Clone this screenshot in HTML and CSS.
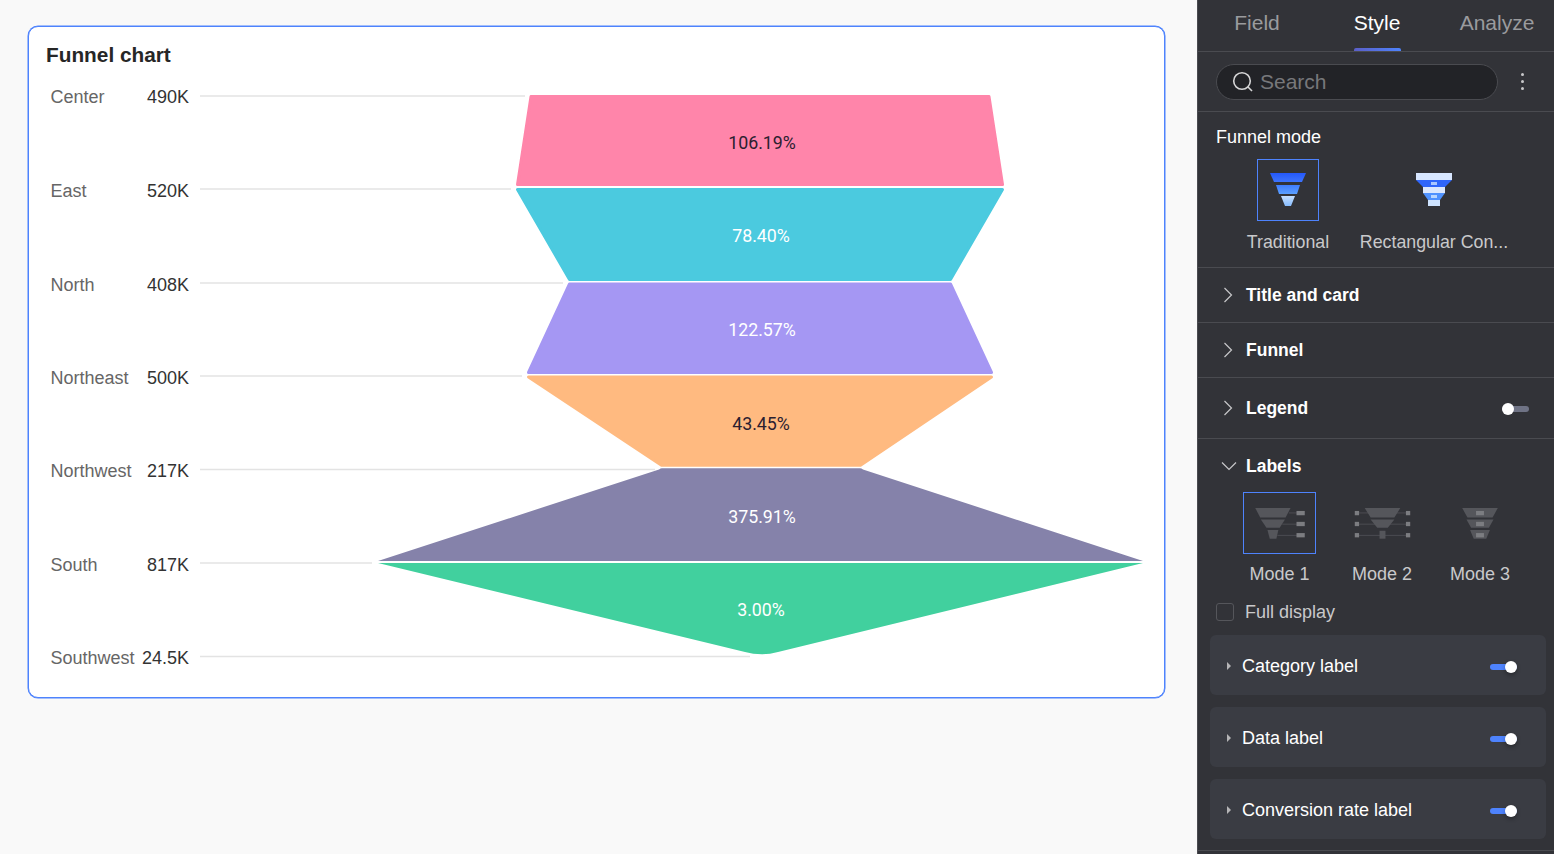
FILE: index.html
```html
<!DOCTYPE html>
<html>
<head>
    <title>Funnel chart</title>
    <meta charset="UTF-8">
    <link rel="stylesheet" href="styles.css">
</head>
<body>
    <div class="canvas">
        <div class="card">
            <h2 class="card-title">Funnel chart</h2>
            <!-- viewBox uses page coordinates so the shapes are easy to read off -->
            <svg class="funnel" viewBox="29 79 1135 618" width="1135" height="618">
                <g class="leaders">
                    <line x1="200" x2="525" y1="96" y2="96"/>
                    <line x1="200" x2="511" y1="189" y2="189"/>
                    <line x1="200" x2="563" y1="283" y2="283"/>
                    <line x1="200" x2="522" y1="376" y2="376"/>
                    <line x1="200" x2="655" y1="469.5" y2="469.5"/>
                    <line x1="200" x2="372" y1="563" y2="563"/>
                    <line x1="200" x2="750" y1="656.5" y2="656.5"/>
                </g>
                <g class="cat">
                    <text x="50.5" y="103">Center</text>
                    <text x="50.5" y="197">East</text>
                    <text x="50.5" y="291">North</text>
                    <text x="50.5" y="384">Northeast</text>
                    <text x="50.5" y="477">Northwest</text>
                    <text x="50.5" y="571">South</text>
                    <text x="50.5" y="664">Southwest</text>
                </g>
                <g class="val">
                    <text x="189" y="103">490K</text>
                    <text x="189" y="197">520K</text>
                    <text x="189" y="291">408K</text>
                    <text x="189" y="384">500K</text>
                    <text x="189" y="477">217K</text>
                    <text x="189" y="571">817K</text>
                    <text x="189" y="664">24.5K</text>
                </g>
                <polygon class="seg" fill="#ff85aa" stroke="#ff85aa" points="531,96.5 989,96.5 1002.5,184.5 517.5,184.5"/>
                <polygon class="seg" fill="#4bcadf" stroke="#4bcadf" points="517.5,189.5 1002.5,189.5 950.5,279.5 569.5,279.5"/>
                <polygon class="seg" fill="#a597f3" stroke="#a597f3" points="569.5,284 950.5,284 991.5,372.5 528.5,372.5"/>
                <polygon class="seg" fill="#ffba80" stroke="#ffba80" points="528.5,377 991.5,377 860.5,465.2 661.5,465.2"/>
                <path fill="#8582aa" d="M378,561 L659,469.5 Q660.5,468.3 662,468.3 H860 Q861.5,468.3 863,469.5 L1143,561 Z"/>
                <path fill="#41d09e" d="M378,563 H1143 L778,652 Q770,654.3 762,654.3 Q753,654.3 745,652 Z"/>
                <g class="pct">
                    <text x="762" y="149" class="pct-dark">106.19%</text>
                    <text x="761" y="242">78.40%</text>
                    <text x="762" y="335.5">122.57%</text>
                    <text x="761" y="429.5" class="pct-dark">43.45%</text>
                    <text x="762" y="522.5">375.91%</text>
                    <text x="761" y="616">3.00%</text>
                </g>
            </svg>
        </div>
    </div>

    <div class="panel">
        <div class="tabs">
            <div class="tab">Field</div>
            <div class="tab active">Style</div>
            <div class="tab">Analyze</div>
        </div>

        <div class="search-row">
            <div class="search">
                <svg class="search-icon" viewBox="0 0 22 22" width="22" height="22">
                    <circle cx="10" cy="10" r="8.3"/>
                    <line x1="16" y1="16" x2="20" y2="20"/>
                </svg>
                <span>Search</span>
            </div>
            <div class="kebab"><i></i><i></i><i></i></div>
        </div>

        <div class="mode-section">
            <div class="section-label">Funnel mode</div>
            <div class="mode-grid">
                <div class="mode-item">
                    <div class="mode-box selected">
                        <svg viewBox="0 0 36 34" width="36" height="34">
                            <defs>
                                <linearGradient id="fa" x1="0" x2="0" y1="0" y2="1">
                                    <stop offset="0" stop-color="#2458fb"/>
                                    <stop offset="1" stop-color="#3d74fd"/>
                                </linearGradient>
                                <linearGradient id="fb" x1="0" x2="0" y1="0" y2="1">
                                    <stop offset="0" stop-color="#3f7cfd"/>
                                    <stop offset="1" stop-color="#5ba0ff"/>
                                </linearGradient>
                                <linearGradient id="fc" x1="0" x2="0" y1="0" y2="1">
                                    <stop offset="0" stop-color="#c6e0ff"/>
                                    <stop offset="1" stop-color="#86bcff"/>
                                </linearGradient>
                            </defs>
                            <polygon fill="url(#fa)" points="0,0 36,0 32,9 4,9"/>
                            <polygon fill="url(#fb)" points="6,12 30,12 27,21 9,21"/>
                            <polygon fill="url(#fc)" points="11,23 25,23 21,33 15,33"/>
                        </svg>
                    </div>
                    <div class="mode-name">Traditional</div>
                </div>
                <div class="mode-item">
                    <div class="mode-box">
                        <svg viewBox="0 0 36 34" width="36" height="34">
                            <rect fill="#d7e6ff" x="0" y="0" width="36" height="7"/>
                            <polygon fill="#2f66fb" points="0,7 36,7 29,14 7,14"/>
                            <rect fill="#a9c6ff" x="15" y="9" width="6" height="3"/>
                            <rect fill="#dbe8ff" x="7" y="14" width="22" height="6"/>
                            <polygon fill="#4f92ff" points="7,20 29,20 24,27 12,27"/>
                            <rect fill="#b9d6ff" x="15" y="22" width="6" height="3"/>
                            <rect fill="#cfe4ff" x="12" y="27" width="12" height="6"/>
                        </svg>
                    </div>
                    <div class="mode-name">Rectangular Con...</div>
                </div>
            </div>
        </div>

        <div class="row row-title">
            <svg class="chev" viewBox="0 0 10 16" width="10" height="16"><polyline points="1.5,1 8.5,8 1.5,15"/></svg>
            <span>Title and card</span>
        </div>
        <div class="row row-funnel">
            <svg class="chev" viewBox="0 0 10 16" width="10" height="16"><polyline points="1.5,1 8.5,8 1.5,15"/></svg>
            <span>Funnel</span>
        </div>
        <div class="row row-legend">
            <svg class="chev" viewBox="0 0 10 16" width="10" height="16"><polyline points="1.5,1 8.5,8 1.5,15"/></svg>
            <span>Legend</span>
            <div class="toggle off"><i></i></div>
        </div>

        <div class="labels-section">
            <div class="labels-head">
                <svg class="chev-down" viewBox="0 0 16 10" width="16" height="10"><polyline points="1,1.5 8,8.5 15,1.5"/></svg>
                <span>Labels</span>
            </div>
            <div class="label-grid">
                <div class="mode-item">
                    <div class="label-box selected">
                        <svg viewBox="60 55 156 100" width="52" height="33">
                            <g class="ln"><line x1="165" x2="190" y1="73" y2="73"/><line x1="145" x2="190" y1="107" y2="107"/><line x1="130" x2="190" y1="141" y2="141"/></g>
                            <g class="tr"><polygon points="63,58 170,58 155,87 78,87"/><polygon points="80,93 153,93 137,118 97,118"/><polygon points="100,125 133,125 127,151 107,151"/></g>
                            <g class="bx"><rect x="188" y="67" width="25" height="13"/><rect x="188" y="100" width="25" height="13"/><rect x="188" y="134" width="25" height="13"/></g>
                        </svg>
                    </div>
                    <div class="mode-name">Mode 1</div>
                </div>
                <div class="mode-item">
                    <div class="label-box">
                        <svg viewBox="355 55 172 100" width="57" height="33">
                            <g class="ln"><line x1="363" x2="518" y1="73" y2="73"/><line x1="363" x2="518" y1="107" y2="107"/><line x1="363" x2="518" y1="141" y2="141"/></g>
                            <g class="tr"><polygon points="387,58 495,58 477,87 405,87"/><polygon points="405,93 477,93 457,118 425,118"/><rect x="432" y="127" width="18" height="24"/></g>
                            <g class="bx"><rect x="357" y="67" width="13" height="13"/><rect x="512" y="67" width="13" height="13"/><rect x="357" y="100" width="13" height="13"/><rect x="512" y="100" width="13" height="13"/><rect x="357" y="134" width="13" height="13"/><rect x="512" y="134" width="13" height="13"/></g>
                        </svg>
                    </div>
                    <div class="mode-name">Mode 2</div>
                </div>
                <div class="mode-item">
                    <div class="label-box">
                        <svg viewBox="678 55 114 100" width="38" height="33">
                            <g class="tr"><polygon points="681,58 789,58 773,87 697,87"/><polygon points="694,93 776,93 762,118 708,118"/><polygon points="705,125 765,125 754,151 716,151"/></g>
                            <g class="bx"><rect x="723" y="67" width="24" height="13"/><rect x="723" y="100" width="24" height="13"/><rect x="723" y="134" width="24" height="13"/></g>
                        </svg>
                    </div>
                    <div class="mode-name">Mode 3</div>
                </div>
            </div>
            <div class="full-display">
                <div class="checkbox"></div>
                <span>Full display</span>
            </div>
        </div>

        <div class="sub-cards">
            <div class="sub-card">
                <i class="caret"></i>
                <span>Category label</span>
                <div class="toggle on"><i></i></div>
            </div>
            <div class="sub-card">
                <i class="caret"></i>
                <span>Data label</span>
                <div class="toggle on"><i></i></div>
            </div>
            <div class="sub-card">
                <i class="caret"></i>
                <span>Conversion rate label</span>
                <div class="toggle on"><i></i></div>
            </div>
        </div>
    </div>
</body>
</html>
```

FILE: styles.css
```css
html, body {
    height: 100%;
}
body {
    margin: 0;
    display: flex;
    height: 854px;
    overflow: hidden;
    background-color: #f9f9f9;
    font-family: "Liberation Sans", Arial, sans-serif;
}

/* left side */
.canvas {
    width: 1197px;
    padding: 26px 32px 0 28px;
    box-sizing: border-box;
}
.card {
    height: 672px;
    box-sizing: border-box;
    background-color: #ffffff;
    border: 1px solid #4e83fd;
    border-radius: 10px;
    box-shadow: 0 0 0 0.5px #4e83fd;
    overflow: hidden;
}
.card-title {
    margin: 0;
    padding: 15px 0 0 17px;
    height: 37px;
    box-sizing: border-box;
    font-size: 20.8px;
    line-height: 25px;
    font-weight: bold;
    color: #262626;
}
.funnel {
    display: block;
    margin-top: 15px;
}
.leaders line {
    stroke: #e3e3e3;
    stroke-width: 1.5;
}
.cat text {
    font-size: 18px;
    fill: #666666;
}
.val text {
    font-size: 18px;
    fill: #333333;
    text-anchor: end;
}
.seg {
    stroke-width: 3;
    stroke-linejoin: round;
}
.pct text {
    font-family: Roboto, sans-serif;
    font-size: 17.8px;
    fill: #ffffff;
    text-anchor: middle;
}
.pct .pct-dark {
    fill: #2b2030;
}

/* right side */
.panel {
    width: 357px;
    flex-shrink: 0;
    box-sizing: border-box;
    background-color: #323338;
    border-left: 1px solid #4a4b50;
    color: #ffffff;
}
.tabs {
    display: flex;
    height: 52px;
    box-sizing: border-box;
    border-bottom: 1px solid #4a4b50;
}
.tab {
    width: 120px;
    flex-shrink: 0;
    text-align: center;
    font-size: 21px;
    line-height: 46px;
    color: #9a9b9e;
}
.tab:first-child {
    margin-left: -1px;
}
.tab.active {
    color: #ffffff;
    position: relative;
}
.tab.active::after {
    content: "";
    position: absolute;
    left: 37px;
    right: 36px;
    bottom: 0;
    height: 3px;
    border-radius: 2px 2px 0 0;
    background: linear-gradient(90deg, #5b5fc7, #4e83fd);
}
.search-row {
    display: flex;
    align-items: center;
    height: 60px;
    box-sizing: border-box;
    border-bottom: 1px solid #4a4b50;
    padding: 0 0 0 18px;
}
.search {
    display: flex;
    align-items: center;
    gap: 6px;
    width: 282px;
    height: 36px;
    box-sizing: border-box;
    padding-left: 15px;
    background-color: #222327;
    border: 1px solid #4a4b50;
    border-radius: 18px;
    font-size: 21px;
    color: #77787b;
}
.search-icon {
    flex-shrink: 0;
}
.search-icon circle,
.search-icon line {
    fill: none;
    stroke: #d5d5d6;
    stroke-width: 1.6;
}
.kebab {
    display: flex;
    flex-direction: column;
    gap: 4px;
    margin-left: 23px;
}
.kebab i {
    width: 3px;
    height: 3px;
    border-radius: 50%;
    background-color: #c8c8ca;
}
.mode-section {
    height: 156px;
    box-sizing: border-box;
    border-bottom: 1px solid #4a4b50;
    padding-top: 14px;
}
.section-label {
    padding-left: 18px;
    font-size: 18px;
    line-height: 22px;
}
.mode-grid {
    display: grid;
    grid-template-columns: 100px 192px;
    padding-left: 40px;
    margin-top: 11px;
}
.mode-item {
    display: flex;
    flex-direction: column;
    align-items: center;
}
.mode-box {
    width: 62px;
    height: 62px;
    box-sizing: border-box;
    display: flex;
    align-items: center;
    justify-content: center;
    border: 1px solid transparent;
}
.selected {
    border: 1px solid #4e83fd;
}
.mode-name {
    margin-top: 10px;
    font-size: 17.8px;
    line-height: 22px;
    color: #c9c9cb;
    white-space: nowrap;
}
.row {
    display: flex;
    align-items: center;
    box-sizing: border-box;
    border-bottom: 1px solid #4a4b50;
    padding-left: 25px;
    font-size: 17.5px;
    font-weight: bold;
}
.row-title,
.row-funnel {
    height: 55px;
}
.row-legend {
    height: 61px;
}
.chev {
    margin-right: 13px;
}
.chev polyline,
.chev-down polyline {
    fill: none;
    stroke: #c8c8ca;
    stroke-width: 1.2;
}
.toggle {
    position: relative;
    width: 27px;
    height: 6px;
    border-radius: 3px;
    margin-left: auto;
    margin-top: 2px;
}
.toggle i {
    position: absolute;
    top: -3px;
    width: 12px;
    height: 12px;
    border-radius: 50%;
    background-color: #ffffff;
}
.toggle.off {
    background-color: #6f7385;
    margin-right: 25px;
}
.toggle.off i {
    left: 0;
}
.toggle.on {
    background-color: #4e83fd;
    margin-right: 29px;
}
.toggle.on i {
    right: 0;
    box-shadow: 0 2px 4px rgba(0, 0, 0, 0.3);
}
.labels-section {
    height: 196px;
    box-sizing: border-box;
    padding-top: 15px;
}
.labels-head {
    display: flex;
    align-items: center;
    gap: 9px;
    padding-left: 23px;
    font-size: 17.5px;
    font-weight: bold;
    line-height: 24px;
}
.label-grid {
    display: grid;
    grid-template-columns: 73px 132px 64px;
    padding-left: 45px;
    margin-top: 14px;
}
.label-grid .mode-name {
    margin-top: 9px;
    font-size: 18px;
}
.label-box {
    width: 73px;
    height: 62px;
    box-sizing: border-box;
    display: flex;
    align-items: center;
    justify-content: center;
}
.label-box svg {
    flex-shrink: 0;
}
.ln line {
    stroke: #4c4d52;
    stroke-width: 3;
}
.tr polygon,
.tr rect {
    fill: #55565b;
}
.bx rect {
    fill: #7c7d81;
}
.full-display {
    display: flex;
    align-items: center;
    gap: 11px;
    padding-left: 18px;
    margin-top: 16px;
    font-size: 18px;
    line-height: 22px;
    color: #c9c9cb;
}
.checkbox {
    width: 18px;
    height: 18px;
    box-sizing: border-box;
    border: 1px solid #55565b;
    border-radius: 3px;
}
.sub-cards {
    display: flex;
    flex-direction: column;
    gap: 12px;
    padding: 0 8px 11px 12px;
    border-bottom: 1px solid #4a4b50;
}
.sub-card {
    display: flex;
    align-items: center;
    height: 60px;
    box-sizing: border-box;
    padding-left: 17px;
    padding-top: 2px;
    background-color: #3a3c43;
    border-radius: 6px;
    font-size: 18px;
}
.caret {
    width: 0;
    height: 0;
    border-left: 4px solid #b5b5b7;
    border-top: 4px solid transparent;
    border-bottom: 4px solid transparent;
    margin-right: 11px;
}
```
